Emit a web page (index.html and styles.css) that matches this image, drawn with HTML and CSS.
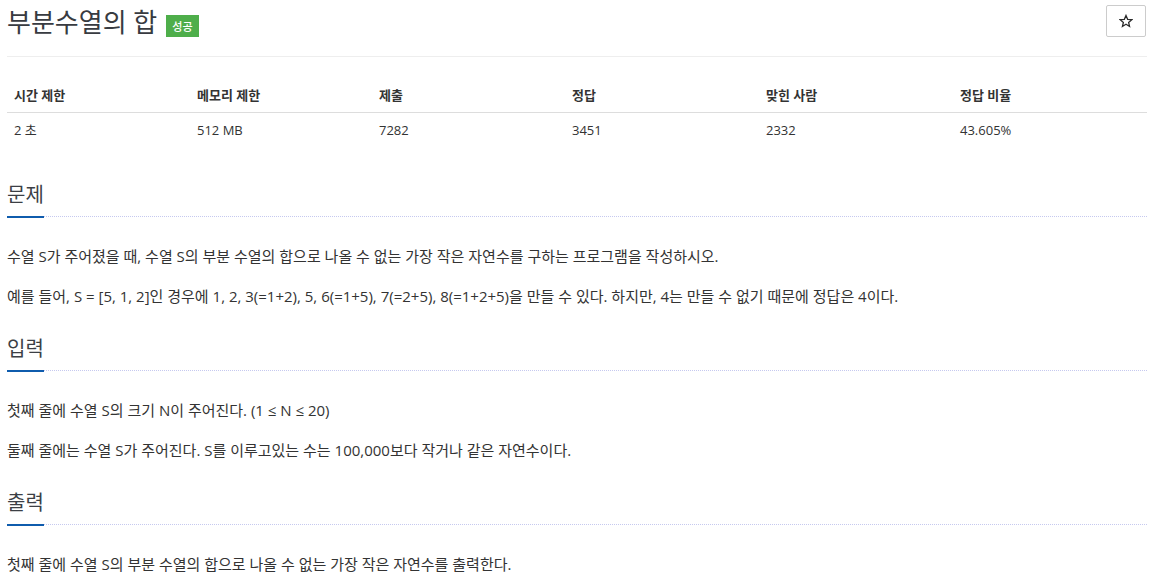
FILE: index.html
```html
<!DOCTYPE html>
<html lang="ko">
<head>
<meta charset="utf-8">
<title>부분수열의 합</title>
<link rel="stylesheet" href="styles.css">
</head>
<body>
<div class="page">
  <div class="page-header">
    <h1 class="title"><span class="title-text">부분수열의 합</span><span class="badge">성공</span></h1>
    <button class="star" type="button" aria-label="즐겨찾기">
      <svg width="14" height="14" viewBox="0 0 24 24" aria-hidden="true"><path d="M12 2.5l2.8 6.6 7.1.6-5.4 4.7 1.6 7-6.1-3.7-6.1 3.7 1.6-7L2.1 9.7l7.1-.6z" fill="none" stroke="#2b2b2b" stroke-width="2.2" stroke-linejoin="miter"/></svg>
    </button>
  </div>

  <table class="stats">
    <colgroup>
      <col class="c1"><col class="c2"><col class="c3"><col class="c4"><col class="c5"><col class="c6">
    </colgroup>
    <thead>
      <tr><th>시간 제한</th><th>메모리 제한</th><th>제출</th><th>정답</th><th>맞힌 사람</th><th>정답 비율</th></tr>
    </thead>
    <tbody>
      <tr><td>2 초</td><td>512 MB</td><td>7282</td><td>3451</td><td>2332</td><td>43.605%</td></tr>
    </tbody>
  </table>

  <section class="section">
    <div class="headline"><h2>문제</h2></div>
    <div class="text">
      <p>수열 S가 주어졌을 때, 수열 S의 부분 수열의 합으로 나올 수 없는 가장 작은 자연수를 구하는 프로그램을 작성하시오.</p>
      <p>예를 들어, S = [5, 1, 2]인 경우에 1, 2, 3(=1+2), 5, 6(=1+5), 7(=2+5), 8(=1+2+5)을 만들 수 있다. 하지만, 4는 만들 수 없기 때문에 정답은 4이다.</p>
    </div>
  </section>

  <section class="section">
    <div class="headline"><h2>입력</h2></div>
    <div class="text">
      <p>첫째 줄에 수열 S의 크기 N이 주어진다. (1 ≤ N ≤ 20)</p>
      <p>둘째 줄에는 수열 S가 주어진다. S를 이루고있는 수는 100,000보다 작거나 같은 자연수이다.</p>
    </div>
  </section>

  <section class="section">
    <div class="headline"><h2>출력</h2></div>
    <div class="text">
      <p>첫째 줄에 수열 S의 부분 수열의 합으로 나올 수 없는 가장 작은 자연수를 출력한다.</p>
    </div>
  </section>
</div>
</body>
</html>
```

FILE: styles.css
```css
* { box-sizing: border-box; }

html, body {
  margin: 0;
  padding: 0;
  background: #fff;
}

body {
  font-family: "Open Sans", "Liberation Sans", "Noto Sans CJK KR", sans-serif;
  font-size: 14px;
  color: #333;
}

.page {
  padding: 0 6px 0 7px;
}

.page-header {
  display: flex;
  justify-content: space-between;
  align-items: flex-start;
  height: 57px;
  border-bottom: 1px solid #eee;
}

.title {
  display: flex;
  align-items: flex-end;
  gap: 9px;
  margin: 6px 0 0;
  font-size: 26px;
  font-weight: normal;
  line-height: 32px;
  color: #383b41;
}

.badge {
  display: inline-flex;
  align-items: center;
  height: 22px;
  padding: 0 6px;
  margin-bottom: 1px;
  background: #4eae4a;
  color: #fff;
  font-size: 11px;
  line-height: 1;
  font-weight: 500;
}

.star {
  display: flex;
  align-items: center;
  justify-content: center;
  margin: 5px 1px 0 0;
  width: 40px;
  height: 32px;
  padding: 0;
  background: #fff;
  border: 1px solid #ccc;
  border-radius: 2px;
}

.stats {
  width: 1140px;
  table-layout: fixed;
  border-collapse: collapse;
  margin: 21px 0 35px;
  font-size: 13px;
}

.stats .c1 { width: 183px; }
.stats .c2 { width: 182px; }
.stats .c3 { width: 193px; }
.stats .c4 { width: 194px; }
.stats .c5 { width: 194px; }
.stats .c6 { width: 194px; }

.stats th,
.stats td {
  text-align: left;
  padding: 8px 7px;
  line-height: 18px;
  color: #333;
}

.stats th {
  font-weight: bold;
  border-bottom: 1px solid #ddd;
}

.section {
  display: flow-root;
  margin-bottom: 29px;
}

.headline {
  display: flex;
  border-bottom: 1px dotted #c6c9ef;
}

.headline h2 {
  margin: 0 0 -2px;
  padding: 0 0 8px;
  font-size: 20px;
  line-height: 26px;
  font-weight: normal;
  color: #3c3f45;
  border-bottom: 2px solid #0f5cad;
}

.text {
  padding-top: 28px;
}

.text p {
  margin: 0 0 18px;
  line-height: 22px;
  font-size: 15px;
  color: #333;
}

.text p:last-child {
  margin-bottom: 0;
}
```
